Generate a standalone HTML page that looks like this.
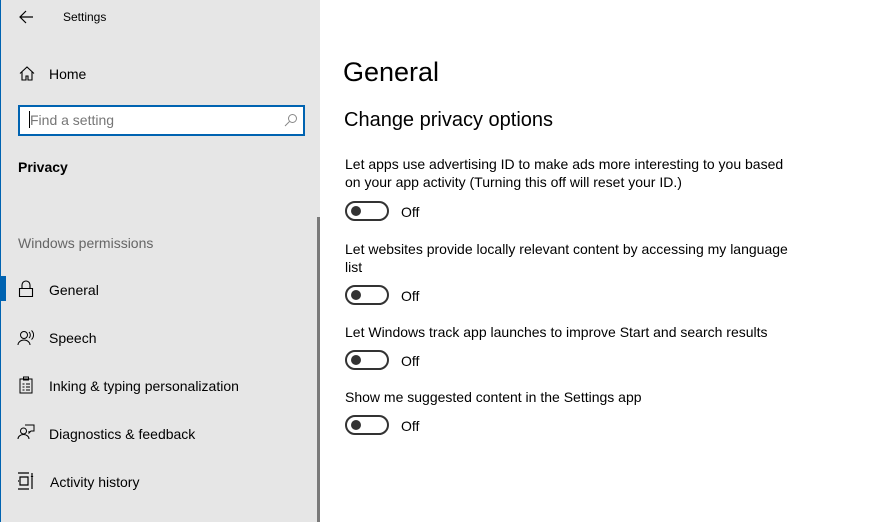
<!DOCTYPE html>
<html><head><style>
*{margin:0;padding:0;box-sizing:border-box}
body{width:889px;height:522px;overflow:hidden;background:#fff;font-family:"Liberation Sans","Segoe UI",sans-serif;position:relative;color:#000}
#side{position:absolute;left:0;top:0;width:320px;height:522px;background:#e6e6e6;border-left:1px solid #0063b1}
.a{position:absolute;white-space:nowrap}
.nav{font-size:14px;color:#000}
.ic{position:absolute}
.tog{position:absolute;left:345px;width:44px;height:20px;border:2px solid #333;border-radius:10px}
.tog::after{content:"";position:absolute;left:4px;top:3px;width:10px;height:10px;border-radius:50%;background:#333}
.off{position:absolute;left:401px;font-size:14px}
.lbl{position:absolute;left:345px;font-size:14px;line-height:18px;width:450px}
</style></head><body>
<div id="side">
<svg class="ic" style="left:17px;top:9px" width="16" height="16" viewBox="0 0 16 16"><path d="M15 8H2M8 2L2 8l6 6" stroke="#000" stroke-width="1.2" fill="none"/></svg>
<div class="a" style="left:62px;top:10px;font-size:12px">Settings</div>
<svg class="ic" style="left:18px;top:66px" width="16" height="15" viewBox="0 0 16 15"><path d="M1 7.5L8 1l7 6.5M3 6v8h4v-4h2v4h4V6" stroke="#000" stroke-width="1.1" fill="none"/></svg>
<div class="a nav" style="left:48px;top:66px">Home</div>
<div class="a" style="left:17px;top:105px;width:287px;height:31px;background:#fff;border:2px solid #0063b1"></div>
<div class="a" style="left:28px;top:111px;width:1px;height:17px;background:#000"></div>
<div class="a" style="left:29px;top:112px;font-size:14px;color:#767676">Find a setting</div>
<svg class="ic" style="left:283px;top:113px" width="14" height="14" viewBox="0 0 14 14"><circle cx="8.5" cy="5.5" r="4" stroke="#888" fill="none"/><path d="M5.5 8.5L1 13" stroke="#888"/></svg>
<div class="a" style="left:17px;top:159px;font-size:14px;font-weight:bold">Privacy</div>
<div class="a" style="left:17px;top:235px;font-size:14px;color:#666">Windows permissions</div>
<div class="a" style="left:0;top:276px;width:5px;height:25px;background:#0063b1"></div>
<svg class="ic" style="left:17px;top:280px" width="16" height="18" viewBox="0 0 16 18"><path d="M4 8V5a4 4 0 0 1 8 0v3M1.5 8.5h13v8h-13z" stroke="#000" stroke-width="1.1" fill="none"/></svg>
<div class="a nav" style="left:48px;top:282px">General</div>
<svg class="ic" style="left:16px;top:330px" width="18" height="16" viewBox="0 0 18 16"><circle cx="7" cy="5" r="3.5" stroke="#000" fill="none"/><path d="M1 15a6 5 0 0 1 12 0M12 2a4 4 0 0 1 0 6M14.5 0.5a6 6 0 0 1 0 9" stroke="#000" fill="none"/></svg>
<div class="a nav" style="left:48px;top:330px">Speech</div>
<svg class="ic" style="left:18px;top:376px" width="14" height="18" viewBox="0 0 14 18"><path d="M1 3h12v14H1zM4.5 1h5v3h-5zM3.5 8h2M7 8h4M3.5 11h2M7 11h4M3.5 14h2M7 14h4" stroke="#000" fill="none"/></svg>
<div class="a nav" style="left:48px;top:378px">Inking &amp; typing personalization</div>
<svg class="ic" style="left:16px;top:424px" width="18" height="16" viewBox="0 0 18 16"><circle cx="6.5" cy="7" r="3" stroke="#000" fill="none"/><path d="M1 15a5.5 4.5 0 0 1 11 0M8 1h9v6h-3l-2 2V7" stroke="#000" fill="none"/></svg>
<div class="a nav" style="left:48px;top:426px">Diagnostics &amp; feedback</div>
<svg class="ic" style="left:16px;top:472px" width="18" height="18" viewBox="0 0 18 18"><path d="M1 1h11M1 17h11M3 5h8v8H3zM1 9h1M15 1v2M15 6v11" stroke="#000" stroke-width="1.2" fill="none"/><circle cx="15" cy="4.5" r="1.2" fill="#000"/></svg>
<div class="a nav" style="left:49px;top:474px">Activity history</div>
<div class="a" style="left:316px;top:217px;width:3px;height:305px;background:#7a7a7a"></div>
</div>
<div class="a" style="left:343px;top:57px;font-size:27px;font-weight:300">General</div>
<div class="a" style="left:344px;top:109px;font-size:20px">Change privacy options</div>
<div class="lbl" style="top:155px">Let apps use advertising ID to make ads more interesting to you based on your app activity (Turning this off will reset your ID.)</div>
<div class="tog" style="top:201px"></div><div class="off" style="top:204px">Off</div>
<div class="lbl" style="top:240px">Let websites provide locally relevant content by accessing my language list</div>
<div class="tog" style="top:285px"></div><div class="off" style="top:288px">Off</div>
<div class="lbl" style="top:323px">Let Windows track app launches to improve Start and search results</div>
<div class="tog" style="top:350px"></div><div class="off" style="top:353px">Off</div>
<div class="lbl" style="top:388px">Show me suggested content in the Settings app</div>
<div class="tog" style="top:415px"></div><div class="off" style="top:418px">Off</div>
</body></html>
